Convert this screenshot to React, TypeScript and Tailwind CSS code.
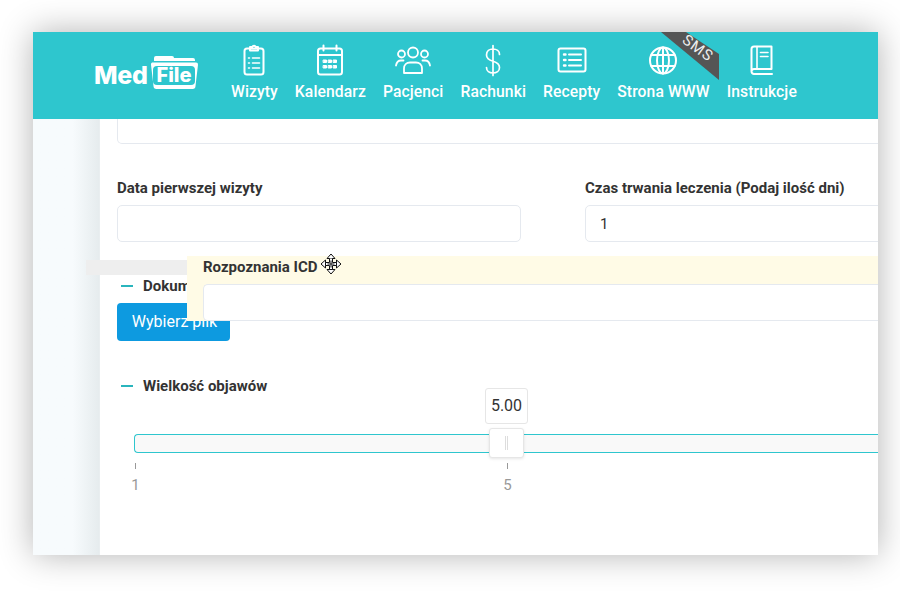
import type { ReactNode } from "react";

const Icon = ({ children, w = 40 }: { children: ReactNode; w?: number }) => (
    <svg width={w} height="34" viewBox="0 0 40 34" fill="none" stroke="#fff" strokeWidth="2" strokeLinecap="round" strokeLinejoin="round">
        {children}
    </svg>
);

const navItems: { label: string; icon: ReactNode }[] = [
    {
        label: "Wizyty",
        icon: (
            <Icon>
                <rect x="10.5" y="5.5" width="19" height="26" rx="2.5" />
                <path d="M16 5.5V4h2.2a2 2 0 0 1 3.6 0H24v3.5h-8z" />
                <path d="M14.500 15h1M14.500 20h1M14.500 25h1M18.500 15h7M18.500 20h7M18.500 25h7" strokeWidth="1.600" />
            </Icon>
        ),
    },
    {
        label: "Kalendarz",
        icon: (
            <Icon>
                <rect x="8" y="5.500" width="24" height="26" rx="2.500" />
                <path d="M8 12h24M13.500 2.500v5M26.500 2.500v5" />
                <path d="M13.500 17h3v2.500h-3zM18.500 17h3v2.500h-3zM23.500 17h3v2.500h-3zM13.500 22.500h3V25h-3zM18.500 22.500h3V25h-3zM23.500 22.500h3V25h-3z" fill="#fff" strokeWidth="1" />
            </Icon>
        ),
    },
    {
        label: "Pacjenci",
        icon: (
            <svg width="36" height="34" viewBox="0 0 36 34" fill="none" stroke="#fff" strokeWidth="1.800" strokeLinecap="round" strokeLinejoin="round">
                <circle cx="18" cy="9.500" r="5" />
                <circle cx="6.500" cy="11" r="3.500" />
                <circle cx="29.500" cy="11" r="3.500" />
                <path d="M9 30v-4.500c0-3.500 2.500-6 6-6h6c3.500 0 6 2.500 6 6V30z" />
                <path d="M1 22.500c.5-3 2.500-5 5-5h2.500M35 22.500c-.5-3-2.500-5-5-5h-2.500" />
            </svg>
        ),
    },
    {
        label: "Rachunki",
        icon: (
            <Icon>
                <path d="M26.500 11.500c0-3.500-3-5.500-6.500-5.500s-6.500 2-6.500 6c0 4 3 5.200 6.500 6.200s6.500 2.300 6.500 6.300c0 3.500-3 5.500-6.500 5.500s-6.500-2-6.500-5.500M20 2.500v30" strokeWidth="1.700" />
            </Icon>
        ),
    },
    {
        label: "Recepty",
        icon: (
            <Icon>
                <rect x="6.500" y="5.500" width="27" height="23" rx="2" />
                <path d="M12 11.500h1.500M12 17h1.500M12 22.500h1.500" strokeWidth="2.400" />
                <path d="M17 11.500h12M17 17h12M17 22.500h12" />
            </Icon>
        ),
    },
    {
        label: "Strona WWW",
        icon: (
            <Icon>
                <circle cx="20" cy="17.500" r="13" />
                <ellipse cx="20" cy="17.500" rx="6" ry="13" />
                <path d="M20 4.500v26M8.500 12h23M8.500 23h23" />
            </Icon>
        ),
    },
    {
        label: "Instrukcje",
        icon: (
            <Icon>
                <path d="M9.500 28V6a2.500 2.500 0 0 1 2.500-2.500h17.500V26H12a2.500 2.500 0 0 0-2.500 2.500A2.500 2.500 0 0 0 12 31h18" />
                <path d="M15 3.500V26" strokeWidth="1.600" />
                <path d="M18.500 9.500h7.500M18.500 13.500h7.500" strokeWidth="1.600" />
            </Icon>
        ),
    },
];

const Logo = () => (
    <div className="flex items-end w-[106px] h-[34px] mt-[23px] shrink-0">
        <span className="font-['Inter',sans-serif] font-extrabold text-[25px] leading-[28px] tracking-[-0.3px] text-white w-[56px]">Med</span>
        <div className="relative w-[50px] h-[34px]">
            <svg width="50" height="34" viewBox="0 0 50 34" className="absolute left-0 top-0">
                <path d="M4 6V3a2 2 0 0 1 2-2h16a2 2 0 0 1 2 2h19a2 2 0 0 1 2 2v1z" fill="#fff" />
                <path d="M2 7.500h44a2 2 0 0 1 2 2.200l-2.500 21.300a3 3 0 0 1-3 3H6.500a3 3 0 0 1-3-3L1 9.700a2 2 0 0 1 1-2.200z" fill="#fff" />
            </svg>
            <span className="absolute left-[3px] top-[11px] w-[42px] h-[19px] bg-[#2ec6ce] rounded-[4px] text-center font-['Inter',sans-serif] font-extrabold text-[20px] leading-[19px] text-white">File</span>
        </div>
    </div>
);

const Header = () => (
    <div className="relative h-[87px] bg-[#2ec6ce] flex pl-[61px] overflow-hidden shrink-0">
        <Logo />
        <div className="flex gap-[17px] ml-[31px] pt-[10px]">
            {navItems.map((item) => (
                <div key={item.label} className="flex flex-col items-center">
                    <div className="h-[36px] flex items-center justify-center">{item.icon}</div>
                    <span className="mt-[4px] text-[15.700px] tracking-[0.09px] font-medium leading-[20px] text-white whitespace-nowrap">{item.label}</span>
                </div>
            ))}
        </div>
        <div className="absolute left-[628px] top-0 w-[58px] h-[48px] bg-[#555] [clip-path:polygon(0_0,43%_0,100%_46%,100%_100%)]" />
        <span className="absolute left-[635px] top-[6px] w-[60px] text-center text-[15px] leading-[20px] tracking-[1px] text-[#eee] rotate-[36deg]">SMS</span>
    </div>
);

const MoveCursor = () => (
    <svg width="22" height="22" viewBox="0 0 22 22" className="absolute left-[117px] top-[-4px]">
        <path d="M11 1 15 5.500H7zM11 21 7 16.500H15zM1 11 5.500 7V15zM21 11 16.500 15V7z" fill="#fff" stroke="#111" strokeWidth="1" strokeLinejoin="miter" />
        <path d="M9.500 5.500V9.500H5.500V12.500H9.500V16.500H12.500V12.500H16.500V9.500H12.500V5.500" fill="#fff" stroke="#111" strokeWidth="1" />
        <path d="M11 7.500V14.500M7.500 11H14.500" stroke="#111" strokeWidth="1" />
    </svg>
);

const SectionTitle = ({ children }: { children: ReactNode }) => (
    <div className="flex items-center h-[20px] pl-[4px]">
        <span className="w-[12px] h-[2px] bg-[#2ab5bd] mr-[10px]" />
        <span className="text-[15px] font-bold text-[#333] whitespace-nowrap">{children}</span>
    </div>
);

const Slider = () => (
    <div className="relative ml-[34px] mt-[38px] w-[760px]">
        <div className="h-[19px] rounded-l-[4px] border border-r-0 border-[#2ec6ce] bg-[#f9f9f9]" />
        <div className="absolute left-[355px] top-[-6px] w-[35px] h-[30px] rounded-[3px] bg-white border border-[#e6e6e6] shadow-[0_1px_3px_rgba(0,0,0,0.1)] flex items-center justify-center gap-[1px]">
            <span className="w-[1px] h-[14px] bg-[#ddd]" />
            <span className="w-[1px] h-[14px] bg-[#ddd]" />
        </div>
        <div className="absolute left-[351px] top-[-46px] w-[43px] h-[36px] rounded-[3px] bg-white border border-[#e6e6e6] flex items-center justify-center text-[16px] text-[#333]">5.00</div>
        <div className="relative h-[36px] mt-[10px] text-[15px] text-[#999]">
            <div className="absolute left-0 top-0 flex flex-col items-center w-[3px]">
                <span className="w-[1px] h-[6px] bg-[#999]" />
                <span className="mt-[7px] leading-[18px]">1</span>
            </div>
            <div className="absolute left-[372px] top-0 flex flex-col items-center w-[3px]">
                <span className="w-[1px] h-[6px] bg-[#999]" />
                <span className="mt-[7px] leading-[18px]">5</span>
            </div>
        </div>
    </div>
);

export default function App() {
    return (
        <div className="w-[900px] h-[600px] bg-white pt-[32px] pl-[33px] font-['Roboto',sans-serif] overflow-hidden">
            <div className="relative w-[845px] h-[523px] flex flex-col bg-white shadow-[0_0_32px_rgba(0,0,0,0.3)]">
                <Header />
                <div className="flex flex-1 min-h-0">
                    <div className="w-[67px] bg-gradient-to-r from-[#f7fbfd] from-60% to-[#e6ecee] border-r border-[#e9eef0]" />
                    <div className="relative flex-1 overflow-hidden">
                        <div className="ml-[17px] w-[790px] h-[25px] rounded-b-[5px] border border-t-0 border-[#e5e9ef]" />
                        <div className="flex gap-[64px] mt-[34px] pl-[17px]">
                            <div className="w-[404px] shrink-0">
                                <div className="text-[15px] leading-[20px] font-bold text-[#333]">Data pierwszej wizyty</div>
                                <div className="h-[37px] mt-[7px] rounded-[5px] border border-[#e5e9ef]" />
                            </div>
                            <div className="w-[400px] shrink-0">
                                <div className="text-[15px] leading-[20px] font-bold text-[#333] whitespace-nowrap">Czas trwania leczenia (Podaj ilość dni)</div>
                                <div className="h-[37px] mt-[7px] rounded-[5px] border border-[#e5e9ef] flex items-center pl-[14px] pt-[1px] text-[15px] text-[#333]">1</div>
                            </div>
                        </div>
                        <div className="mt-[34px] pl-[17px]">
                            <SectionTitle>Dokumenty</SectionTitle>
                            <button className="mt-[7px] w-[113px] h-[38px] pl-[2px] rounded-[4px] bg-[#0d9ae0] text-white text-[16px]">Wybierz plik</button>
                        </div>
                        <div className="mt-[35px] pl-[17px]">
                            <SectionTitle>Wielkość objawów</SectionTitle>
                        </div>
                        <Slider />
                        <div className="absolute left-[87px] top-[137px] right-0 h-[65px] bg-[#fffbe6] pl-[16px] pt-[1px]">
                            <div className="relative text-[15px] leading-[20px] font-bold text-[#333]">
                                Rozpoznania ICD
                                <MoveCursor />
                            </div>
                            <div className="h-[37px] mt-[7px] rounded-l-[5px] border border-r-0 border-[#e5e9ef] bg-white" />
                        </div>
                    </div>
                    <div className="absolute left-[53px] top-[228px] w-[101px] h-[15px] bg-[#eeeeee]" />
                </div>
            </div>
        </div>
    );
}
